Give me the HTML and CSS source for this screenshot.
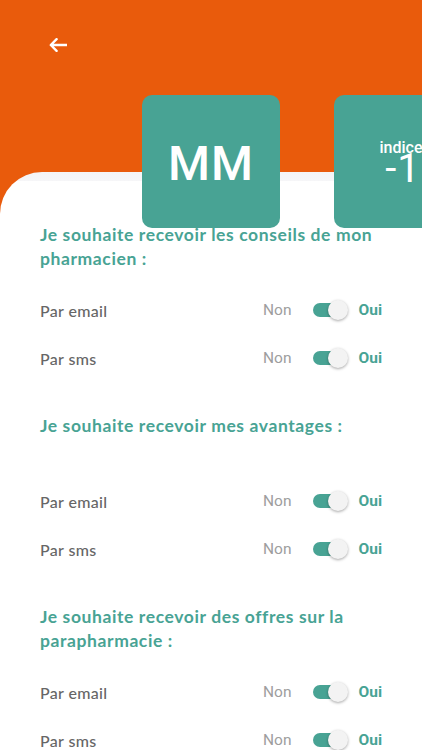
FILE: index.html
```html
<!DOCTYPE html>
<html lang="fr">
<head>
<meta charset="utf-8">
<link rel="stylesheet" href="styles.css">
</head>
<body>
<div class="screen">
  <header class="header">
    <svg class="back" width="18" height="14" viewBox="0 0 18 14"><path d="M17.5 7H2.2M7.6 1.2L1.8 7l5.8 5.8" fill="none" stroke="#fff" stroke-width="2.4" stroke-linecap="round" stroke-linejoin="round"/></svg>
  </header>
  <main class="sheet">
    <div class="cards">
      <div class="card card-initials">MM</div>
      <div class="card card-index"><span class="idx-label">indice</span><span class="idx-value">-1</span></div>
    </div>

    <section class="section first">
      <h2 class="title">Je souhaite recevoir les conseils de mon pharmacien :</h2>
      <div class="row"><span class="label">Par email</span><span class="non">Non</span><span class="toggle"><span class="thumb"></span></span><span class="oui">Oui</span></div>
      <div class="row"><span class="label">Par sms</span><span class="non">Non</span><span class="toggle"><span class="thumb"></span></span><span class="oui">Oui</span></div>
    </section>

    <section class="section">
      <h2 class="title">Je souhaite recevoir mes avantages :</h2>
      <div class="row"><span class="label">Par email</span><span class="non">Non</span><span class="toggle"><span class="thumb"></span></span><span class="oui">Oui</span></div>
      <div class="row"><span class="label">Par sms</span><span class="non">Non</span><span class="toggle"><span class="thumb"></span></span><span class="oui">Oui</span></div>
    </section>

    <section class="section">
      <h2 class="title">Je souhaite recevoir des offres sur la parapharmacie :</h2>
      <div class="row"><span class="label">Par email</span><span class="non">Non</span><span class="toggle"><span class="thumb"></span></span><span class="oui">Oui</span></div>
      <div class="row"><span class="label">Par sms</span><span class="non">Non</span><span class="toggle"><span class="thumb"></span></span><span class="oui">Oui</span></div>
    </section>
  </main>
</div>
</body>
</html>
```

FILE: styles.css
```css
html, body {
  margin: 0;
  padding: 0;
  background: #E95B0C;
}
body {
  width: 422px;
  height: 750px;
  overflow: hidden;
  font-family: Lato, "Open Sans", sans-serif;
}
.screen {
  width: 422px;
  height: 750px;
  overflow: hidden;
}
.header {
  height: 172px;
  box-sizing: border-box;
  padding: 38px 0 0 49px;
  background: #E95B0C;
}
.back {
  display: block;
}
.sheet {
  display: flow-root;
  background: linear-gradient(#f4f4f6 0, #f6f6f8 9px, #ffffff 9px);
  border-top-left-radius: 42px;
  min-height: 600px;
}
.cards {
  display: flex;
  gap: 54px;
  padding-left: 142px;
  margin-top: -77px;
  position: relative;
  z-index: 1;
}
.card {
  flex: 0 0 138px;
  height: 133px;
  border-radius: 10px;
  background: #48A394;
  color: #fff;
  display: flex;
  flex-direction: column;
  align-items: center;
  justify-content: center;
  font-family: Roboto, "Open Sans", sans-serif;
}
.card-initials {
  font-size: 48px;
  font-weight: 500;
  letter-spacing: 1px;
  padding-top: 4px;
  box-sizing: border-box;
}
.card-index {
  justify-content: flex-start;
  padding: 47px 0 0 0;
  box-sizing: border-box;
}
.idx-label {
  font-size: 16px;
  font-weight: 500;
  line-height: 12px;
  margin-left: -4px;
}
.idx-value {
  font-size: 40px;
  line-height: 30px;
  font-weight: 400;
  letter-spacing: 1px;
}
.section {
  padding: 0 40px;
  margin-top: 32px;
}
.section.first {
  margin-top: -5px;
}
.title {
  margin: 0 0 15px;
  min-height: 48px;
  font-size: 17.5px;
  line-height: 24px;
  font-weight: 700;
  color: #48A394;
  letter-spacing: 0.6px;
}
.row {
  display: flex;
  align-items: center;
  height: 48px;
}
.label {
  flex: 1;
  font-size: 16px;
  font-weight: 500;
  color: #666666;
  letter-spacing: 0.35px;
}
.non {
  font-family: Roboto, sans-serif;
  font-size: 15.5px;
  color: #9e9e9e;
  margin-right: 21px;
}
.toggle {
  position: relative;
  width: 35px;
  height: 20px;
  display: flex;
  align-items: center;
}
.toggle::before {
  content: "";
  display: block;
  width: 34px;
  height: 14px;
  border-radius: 7px;
  background: #48A394;
}
.thumb {
  position: absolute;
  right: 0;
  top: 0;
  width: 20px;
  height: 20px;
  border-radius: 50%;
  background: #f3f3f3;
  box-shadow: 0 1px 3px rgba(0,0,0,0.35);
}
.oui {
  font-family: Roboto, sans-serif;
  font-size: 15.5px;
  font-weight: 700;
  color: #48A394;
  margin-left: 11px;
}
```
